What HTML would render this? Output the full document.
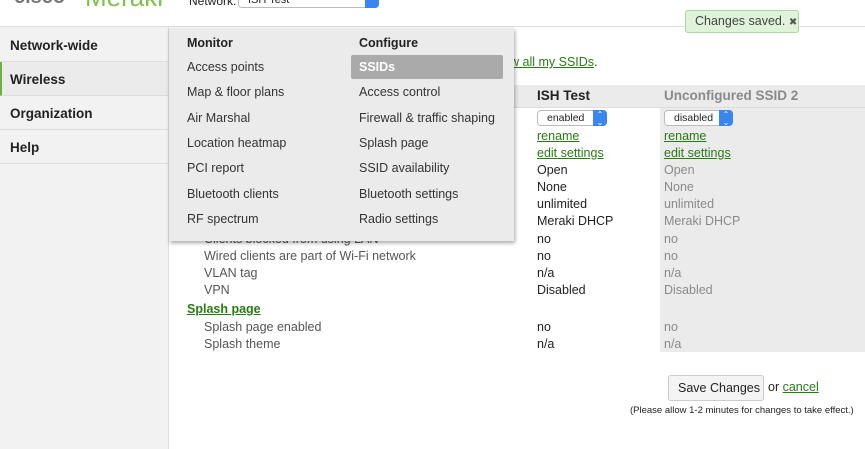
<!DOCTYPE html>
<html><head><style>
*{margin:0;padding:0;box-sizing:border-box}
body{width:865px;height:449px;overflow:hidden;background:#fff;font-family:"Liberation Sans",Arial,sans-serif;font-size:12px;color:#222;position:relative}
.a{position:absolute;white-space:nowrap}
a,.lnk{color:#2a7a14;text-decoration:underline}
.side{position:absolute;left:0;top:27px;width:169px;height:422px;background:#f2f2f2;border-right:1px solid #ddd}
.si{position:absolute;left:0;width:168px;height:34px;border-bottom:1px solid #ddd;font-weight:bold;font-size:13.5px;padding:10px 0 0 10px}
.menu{position:absolute;left:169px;top:28px;width:345px;height:213px;background:#ebebeb;box-shadow:1px 2px 4px rgba(0,0,0,.35)}
.mi{position:absolute;font-size:12.5px;color:#333}
.g{color:#8a8a8a}
.sel{position:absolute;height:16px;background:#fff;border:1px solid #bbb;border-radius:4px;font-size:10.5px;padding:1px 0 0 9px}
.sel b{position:absolute;right:-1px;top:-1px;width:14px;height:16px;background:#3a86f0;border-radius:0 4px 4px 0;color:#fff;font-size:8px;text-align:center;line-height:8px;font-weight:normal;padding-top:1px}
</style></head><body>
<div class="a" style="left:14px;top:-14px;font-size:20px;color:#777;font-weight:bold">cisco</div>
<div class="a" style="left:85px;top:-18px;font-size:26px;color:#7fc14a">Meraki</div>
<div class="a" style="left:189px;top:-6px;font-size:12px">Network:</div>
<div class="sel" style="left:238px;top:-8px;width:141px;font-size:11px">ISH Test<b>⌄</b></div>
<div class="a" style="left:0;top:26px;width:865px;height:1px;background:#ddd"></div>
<div class="a" style="left:685px;top:10px;width:114px;height:23px;background:#dff3da;border:1px solid #a9d99d;border-radius:3px;font-size:12.5px;color:#444;padding:3px 0 0 9px">Changes saved. <span style="font-size:10px;color:#555">✖</span></div>

<div class="side">
<div class="si" style="top:1px">Network-wide</div>
<div class="si" style="top:35px;background:#ebebeb;border-left:2px solid #6bb33e;padding-left:8px">Wireless</div>
<div class="si" style="top:69px">Organization</div>
<div class="si" style="top:103px">Help</div>
</div>

<div class="a" style="left:510px;top:55px;font-size:12.5px"><span class="lnk">w all my SSIDs</span>.</div>
<div class="a" style="left:170px;top:85px;width:695px;height:23px;background:#ebebeb;border-bottom:1px solid #ddd"></div>
<div class="a" style="left:660px;top:108px;width:205px;height:244px;background:#ebebeb"></div>
<div class="a" style="left:537px;top:88px;font-size:13.5px;font-weight:bold">ISH Test</div>
<div class="a g" style="left:664px;top:88px;font-size:13.5px;font-weight:bold">Unconfigured SSID 2</div>
<div class="sel" style="left:537px;top:110px;width:70px">enabled<b>⌃<br>⌄</b></div>
<div class="sel" style="left:664px;top:110px;width:69px">disabled<b>⌃<br>⌄</b></div>

<div style="font-size:12.5px">
<div class="a lnk" style="left:537px;top:129px">rename</div><div class="a lnk" style="left:664px;top:129px">rename</div>
<div class="a lnk" style="left:537px;top:146px">edit settings</div><div class="a lnk" style="left:664px;top:146px">edit settings</div>
<div class="a" style="left:537px;top:163px">Open</div><div class="a g" style="left:664px;top:163px">Open</div>
<div class="a" style="left:537px;top:180px">None</div><div class="a g" style="left:664px;top:180px">None</div>
<div class="a" style="left:537px;top:197px">unlimited</div><div class="a g" style="left:664px;top:197px">unlimited</div>
<div class="a" style="left:537px;top:214px">Meraki DHCP</div><div class="a g" style="left:664px;top:214px">Meraki DHCP</div>
<div class="a" style="left:204px;top:232px;color:#555">Clients blocked from using LAN</div>
<div class="a" style="left:537px;top:232px">no</div><div class="a g" style="left:664px;top:232px">no</div>
<div class="a" style="left:204px;top:249px;color:#555">Wired clients are part of Wi-Fi network</div>
<div class="a" style="left:537px;top:249px">no</div><div class="a g" style="left:664px;top:249px">no</div>
<div class="a" style="left:204px;top:266px;color:#555">VLAN tag</div>
<div class="a" style="left:537px;top:266px">n/a</div><div class="a g" style="left:664px;top:266px">n/a</div>
<div class="a" style="left:204px;top:283px;color:#555">VPN</div>
<div class="a" style="left:537px;top:283px">Disabled</div><div class="a g" style="left:664px;top:283px">Disabled</div>
<div class="a lnk" style="left:187px;top:302px;font-weight:bold">Splash page</div>
<div class="a" style="left:204px;top:320px;color:#555">Splash page enabled</div>
<div class="a" style="left:537px;top:320px">no</div><div class="a g" style="left:664px;top:320px">no</div>
<div class="a" style="left:204px;top:337px;color:#555">Splash theme</div>
<div class="a" style="left:537px;top:337px">n/a</div><div class="a g" style="left:664px;top:337px">n/a</div>
</div>

<div class="menu">
<div class="mi" style="left:18px;top:8px;font-weight:bold;color:#222">Monitor</div>
<div class="mi" style="left:190px;top:8px;font-weight:bold;color:#222">Configure</div>
<div class="a" style="left:182px;top:27px;width:152px;height:24px;background:#aaa;border-radius:2px"></div>
<div class="mi" style="left:18px;top:32px">Access points</div>
<div class="mi" style="left:18px;top:57px">Map &amp; floor plans</div>
<div class="mi" style="left:18px;top:83px">Air Marshal</div>
<div class="mi" style="left:18px;top:108px">Location heatmap</div>
<div class="mi" style="left:18px;top:133px">PCI report</div>
<div class="mi" style="left:18px;top:159px">Bluetooth clients</div>
<div class="mi" style="left:18px;top:184px">RF spectrum</div>
<div class="mi" style="left:190px;top:32px;color:#fff;font-weight:bold">SSIDs</div>
<div class="mi" style="left:190px;top:57px">Access control</div>
<div class="mi" style="left:190px;top:83px">Firewall &amp; traffic shaping</div>
<div class="mi" style="left:190px;top:108px">Splash page</div>
<div class="mi" style="left:190px;top:133px">SSID availability</div>
<div class="mi" style="left:190px;top:159px">Bluetooth settings</div>
<div class="mi" style="left:190px;top:184px">Radio settings</div>
</div>

<div class="a" style="left:668px;top:375px;width:96px;height:26px;background:#f4f4f4;border:1px solid #ccc;border-radius:3px;font-size:12.5px;padding:5px 0 0 9px">Save Changes</div>
<div class="a" style="left:768px;top:380px;font-size:12.5px">or <span class="lnk">cancel</span></div>
<div class="a" style="left:630px;top:405px;font-size:9.5px">(Please allow 1-2 minutes for changes to take effect.)</div>
</body></html>
